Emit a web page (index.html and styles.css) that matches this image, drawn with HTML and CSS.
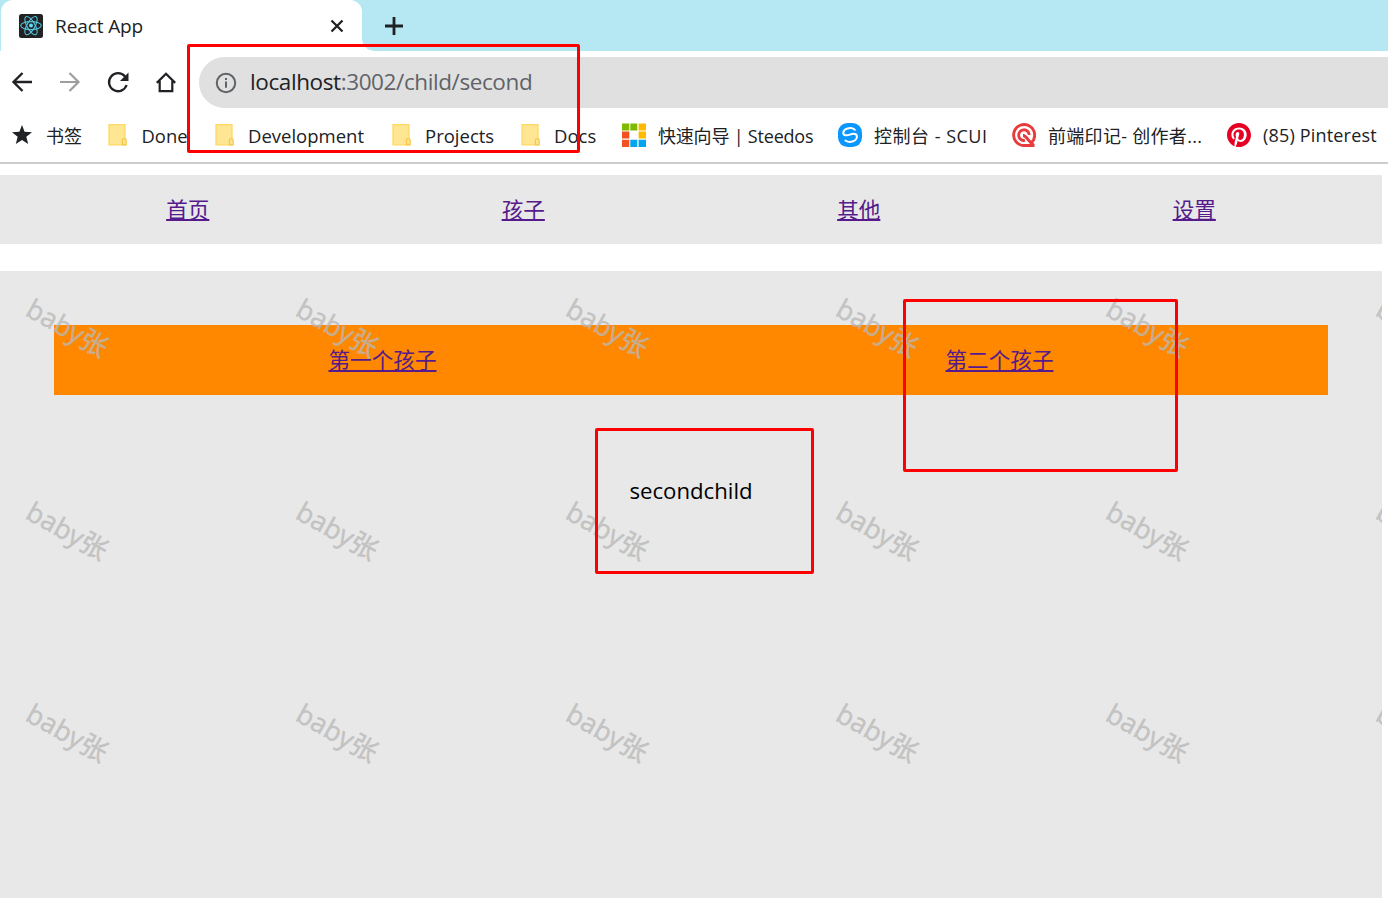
FILE: index.html
```
<!DOCTYPE html>
<html lang="zh-CN">
<head>
<meta charset="utf-8">
<title>React App</title>
<link rel="stylesheet" href="styles.css">
</head>
<body>
<svg width="0" height="0" class="defs">
  <symbol id="folder" viewBox="0 0 20 24">
    <path d="M1 1.600h16v20.200H1z" fill="#ffe693" stroke="#ffd965" stroke-width="1.300"/>
    <path d="M14.400 21.800v-4.300a1.900 1.900 0 0 1 3.800 0v4.300z" fill="#ffe38a" stroke="#f3c94f" stroke-width="1.200"/>
  </symbol>
</svg>
<header class="tabs">
  <div class="tab">
    <svg class="favicon" viewBox="0 0 24 24"><rect width="24" height="24" rx="2.500" fill="#222"/><g fill="none" stroke="#53c1de" stroke-width="1.100"><ellipse cx="12" cy="11.600" rx="10.300" ry="4"/><ellipse cx="12" cy="11.600" rx="10.300" ry="4" transform="rotate(60 12 11.600)"/><ellipse cx="12" cy="11.600" rx="10.300" ry="4" transform="rotate(120 12 11.600)"/></g><circle cx="12" cy="11.600" r="2" fill="#61dafb"/></svg>
    <span class="tab-title">React App</span>
    <svg class="close" viewBox="0 0 14 14"><path d="M1.500 1.500l11 11M12.500 1.500l-11 11" stroke="#202124" stroke-width="2.300"/></svg>
  </div>
  <div class="tab-foot"></div>
  <svg class="plus" viewBox="0 0 18 18"><path d="M9 0v18M0 9h18" stroke="#202124" stroke-width="2.800"/></svg>
</header>
<div class="toolbar">
  <svg class="tool" viewBox="0 0 24 24"><path d="M22 12H3.500M12.500 3L3.500 12l9 9" fill="none" stroke="#202124" stroke-width="2.400"/></svg>
  <svg class="tool" viewBox="0 0 24 24"><path d="M2 12h18.500M11.500 3l9 9-9 9" fill="none" stroke="#9e9e9e" stroke-width="2.200"/></svg>
  <svg class="tool" viewBox="0 0 24 24"><path d="M19 6.500A9 9 0 1 0 20.600 15" fill="none" stroke="#202124" stroke-width="2.300"/><path d="M22.500 2.500v8.500h-8.500z" fill="#202124"/></svg>
  <svg class="tool" viewBox="0 0 24 24"><path d="M2.800 12.900L12 3.800l9.200 9.100M5.700 10.900v10.300h12.600V10.900" fill="none" stroke="#202124" stroke-width="2.200"/></svg>
  <div class="address">
    <svg class="info" viewBox="0 0 22 22"><circle cx="11" cy="11" r="9.200" fill="none" stroke="#5f6368" stroke-width="2"/><path d="M11 9.600v6.200M11 5.900v2.200" stroke="#5f6368" stroke-width="2"/></svg>
    <span class="url"><b>localhost</b>:3002/child/second</span>
  </div>
</div>
<nav class="bookmarks">
  <div class="bm bm-star"><svg class="star" viewBox="0 0 20 20"><path d="M10 0l2.600 6.800 7.400.4-5.700 4.600 1.900 7.200-6.200-4.100L3.800 19l1.900-7.200L0 7.200l7.400-.4z" fill="#202124"/></svg><span>书签</span></div>
  <div class="bm bm-done"><svg class="folder"><use href="#folder"/></svg><span>Done</span></div>
  <div class="bm bm-dev"><svg class="folder"><use href="#folder"/></svg><span>Development</span></div>
  <div class="bm bm-proj"><svg class="folder"><use href="#folder"/></svg><span>Projects</span></div>
  <div class="bm bm-docs"><svg class="folder"><use href="#folder"/></svg><span>Docs</span></div>
  <div class="bm bm-steedos"><svg class="site" viewBox="0 0 24 24"><path d="M0 .5h7.300v7H0zM8.300.5h7v7h-7z" fill="#7fba00"/><path d="M16.600.5H24v7h-7.400zM16.600 8.500H24v7h-7.400z" fill="#ffb900"/><path d="M0 8.500h7.300v7H0zM0 16.700h7.300V24H0z" fill="#f25022"/><path d="M8.300 16.700h7V24h-7zM16.600 16.700H24V24h-7.400z" fill="#00a4ef"/></svg><span>快速向导 | Steedos</span></div>
  <div class="bm bm-scui"><svg class="site" viewBox="0 0 24 24"><rect width="24" height="24" rx="9.500" fill="#0c97ff"/><path d="M16.800 6.800C12.800 3.300 5.600 5.800 5.300 9.600c-.2 3.600 4.400 3 7.200 1.800 3.300-1.400 6.700-.6 6.400 2.600-.5 4.500-7.400 6.300-11.500 3.500" fill="none" stroke="#fff" stroke-width="2" stroke-linecap="round"/></svg><span>控制台 - SCUI</span></div>
  <div class="bm bm-front"><svg class="site" viewBox="0 0 24 24"><g fill="none" stroke="#e93b3d" stroke-width="2.900"><path d="M19.500 19.500A10.500 10.500 0 1 0 12 22.500h10.500"/><path d="M13 17.300a5.300 5.300 0 1 1 4.200-5.300"/><path d="M11 12.500c4 0 4 5 10.500 9.500"/></g></svg><span>前端印记- 创作者...</span></div>
  <div class="bm bm-pin"><svg class="site" viewBox="0 0 24 24"><path d="M12 0C5.400 0 0 5.400 0 12c0 5.100 3.200 9.400 7.600 11.200-.1-.9-.2-2.400 0-3.400l1.400-6s-.4-.7-.4-1.800c0-1.700 1-2.900 2.200-2.900 1 0 1.500.8 1.500 1.700 0 1-.7 2.600-1 4-.3 1.200.6 2.200 1.800 2.200 2.100 0 3.800-2.200 3.800-5.500 0-2.900-2.100-4.900-5-4.900-3.400 0-5.400 2.600-5.400 5.200 0 1 .4 2.100.9 2.700.1.100.1.200.1.400l-.3 1.400c-.1.200-.2.300-.4.200-1.500-.7-2.400-2.900-2.400-4.600 0-3.800 2.800-7.300 7.900-7.300 4.200 0 7.400 3 7.400 6.900 0 4.100-2.600 7.500-6.200 7.500-1.200 0-2.400-.6-2.800-1.400l-.7 2.900c-.3 1-1 2.300-1.500 3.100 1.100.3 2.300.5 3.500.5 6.600 0 12-5.400 12-12S18.600 0 12 0z" fill="#e60023"/></svg><span>(85) Pinterest</span></div>
</nav>
<main class="page">
  <nav class="menu"><a>首页</a><a>孩子</a><a>其他</a><a>设置</a></nav>
  <section class="content">
    <nav class="menu submenu"><a>第一个孩子</a><a>第二个孩子</a></nav>
    <p class="result"><span>secondchild</span></p>
    <div class="watermarks">
      <i>baby张</i><i>baby张</i><i>baby张</i><i>baby张</i><i>baby张</i><i>baby张</i>
      <i>baby张</i><i>baby张</i><i>baby张</i><i>baby张</i><i>baby张</i><i>baby张</i>
      <i>baby张</i><i>baby张</i><i>baby张</i><i>baby张</i><i>baby张</i><i>baby张</i>
    </div>
  </section>
</main>
<div class="mark mark-url"></div>
<div class="mark mark-link"></div>
<div class="mark mark-result"></div>
</body>
</html>
```
FILE: styles.css
```
* { box-sizing: border-box; }
html, body { height: 100%; overflow: hidden; }
body {
  margin: 0;
  position: relative;
  display: flex;
  flex-direction: column;
  background: #fff;
  color: #202124;
  font-family: "Open Sans", "Noto Sans CJK SC", sans-serif;
  white-space: nowrap;
}
svg { display: block; flex: none; }
.defs { position: absolute; }

.tabs { height: 51px; flex: none; display: flex; background: #b5e8f2; }
.tab {
  width: 361px;
  margin-left: 1px;
  padding: 0 18px;
  display: flex;
  align-items: center;
  background: #fff;
  border-radius: 12px 12px 0 0;
}
.favicon { width: 24px; height: 24px; }
.tab-title { margin-left: 12px; font-size: 19px; letter-spacing: -.1px; }
.close { width: 14px; height: 14px; margin-left: auto; }
.tab-foot { width: 12px; height: 12px; align-self: flex-end; background: radial-gradient(circle at 12px 0, #b5e8f2 11.500px, #fff 12px); }
.plus { width: 18px; height: 18px; margin: 17px 0 0 11px; }

.toolbar { height: 62px; flex: none; display: flex; align-items: center; padding-left: 10px; gap: 24px; }
.tool { width: 24px; height: 24px; }
.address {
  height: 51px;
  flex: 1;
  margin-left: -3px;
  padding-left: 16px;
  display: flex;
  align-items: center;
  background: #e0e0e0;
  border-radius: 26px 0 0 26px;
}
.info { width: 22px; height: 22px; margin-top: 2px; }
.url { margin-left: 13px; padding-bottom: 2px; font-size: 22.500px; letter-spacing: -.4px; color: #5f6368; }
.url b { font-weight: 400; color: #202124; }

.bookmarks { height: 51px; flex: none; display: flex; align-items: center; padding: 0 0 5px 12px; border-bottom: 2px solid #ccc; font-size: 18px; }
.bm { display: flex; align-items: center; flex: none; }
.star { width: 20px; height: 20px; margin-right: 15px; }
.folder { width: 20px; height: 24px; margin-right: 13px; }
.site { width: 24px; height: 24px; margin-right: 12px; }
.bm-star { width: 96px; }
.bm-star span { margin-left: -1px; }
.bm-done { width: 107px; font-size: 18.400px; }
.bm-done span { margin-left: .5px; }
.bm-dev { width: 177px; font-size: 18.500px; }
.bm-proj { width: 129px; font-size: 18.500px; }
.bm-docs { width: 101px; font-size: 18.500px; }
.bm-steedos { width: 216px; letter-spacing: -.2px; }
.bm-scui { width: 174px; letter-spacing: .5px; }
.bm-front { width: 215px; letter-spacing: .3px; }
.bm-pin { letter-spacing: .18px; }

.page { flex: 1; width: 1382px; padding-top: 11px; display: flex; flex-direction: column; font-size: 21.600px; color: #000; }
.menu { height: 69px; flex: none; padding: 0 20px 2px; display: flex; justify-content: space-around; align-items: center; background: #e8e8e8; }
.menu a { color: #551a8b; text-decoration: underline; text-underline-offset: 1px; text-decoration-thickness: 2px; text-decoration-skip-ink: none; }
.content { position: relative; flex: 1; margin-top: 27px; padding: 54px; background: #e8e8e8; overflow: hidden; }
.submenu { height: 70px; padding-bottom: 3px; background: #f80; }
.submenu a { text-underline-offset: 2px; }
.result { margin: 81px 0 0; line-height: 30px; font-size: 22.200px; text-align: center; }
.watermarks {
  position: absolute;
  inset: 0 auto auto 0;
  display: grid;
  grid-template-columns: repeat(6, 270px);
  grid-auto-rows: 202.500px;
  color: rgba(184, 184, 184, .75);
  font-size: 27px;
  -webkit-text-stroke: .5px rgba(184, 184, 184, .7);
}
.watermarks i { width: 137px; height: 110px; display: flex; align-items: center; justify-content: center; font-style: normal; transform: rotate(29.500deg); }

.mark { position: absolute; border: 3px solid #f00; border-radius: 2px; }
.mark-url { left: 187px; top: 44px; width: 393px; height: 109px; }
.mark-link { left: 903px; top: 299px; width: 275px; height: 173px; }
.mark-result { left: 595px; top: 428px; width: 219px; height: 146px; }
```
